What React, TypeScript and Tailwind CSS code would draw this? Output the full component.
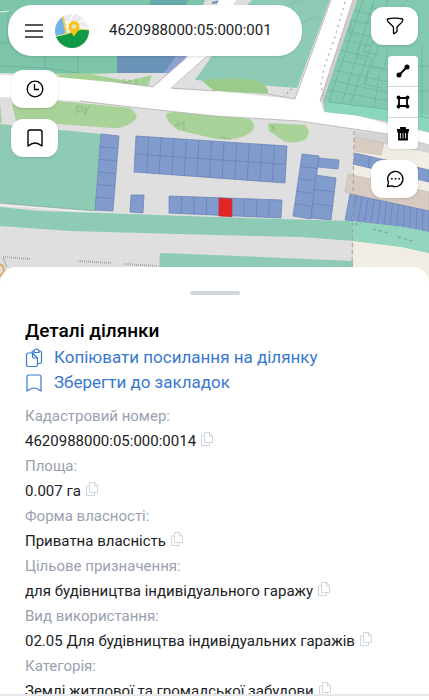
import type { ReactNode } from "react";

const parcelRows = [
  // Each block is a quadrilateral: top-left, top-right, bottom-right, bottom-left, and its column / row counts.
  { p: [101, 134, 119, 136, 113, 211, 95, 210], cols: 1, rows: 6 },
  { p: [136, 136, 287, 146, 285, 183, 134, 172], cols: 12, rows: 2 },
  { p: [131, 195, 144, 195, 143, 213, 130, 212], cols: 1, rows: 1 },
  { p: [169, 196, 282, 200, 281, 218, 169, 213], cols: 9, rows: 1 },
  { p: [302, 154, 319, 156, 311, 219, 293, 216], cols: 1, rows: 5 },
  { p: [319, 158, 339, 160, 338, 169, 318, 167], cols: 1, rows: 1 },
  { p: [316, 175, 336, 178, 331, 220, 311, 218], cols: 1, rows: 3 },
  { p: [355, 153, 429, 170, 429, 182, 353, 164], cols: 5, rows: 1 },
  { p: [350, 194, 429, 211, 429, 232, 345, 220], cols: 13, rows: 1 },
];

function Parcels({ p, cols, rows }: { p: number[]; cols: number; rows: number }) {
  const mix = (a: number, b: number, t: number) => a + (b - a) * t;
  const lines: string[] = [];
  for (let i = 1; i < cols; i++) {
    const t = i / cols;
    lines.push(`M${mix(p[0], p[2], t)} ${mix(p[1], p[3], t)}L${mix(p[6], p[4], t)} ${mix(p[7], p[5], t)}`);
  }
  for (let i = 1; i < rows; i++) {
    const t = i / rows;
    lines.push(`M${mix(p[0], p[6], t)} ${mix(p[1], p[7], t)}L${mix(p[2], p[4], t)} ${mix(p[3], p[5], t)}`);
  }
  return (
    <g stroke="#657fb5" strokeWidth=".7">
      <polygon points={p.join(" ")} fill="#819bcc" />
      <path d={lines.join("")} />
    </g>
  );
}

function CadastralMap() {
  return (
    <svg
      className="absolute inset-0 h-full w-full"
      viewBox="0 0 429 288"
      preserveAspectRatio="xMidYMin slice"
      aria-hidden="true"
    >
      <rect width="429" height="288" fill="#dfdfdf" />
      {/* north-west quarter */}
      <path d="M0 0H205L176 73H0Z" fill="#7cc5a9" />
      <path d="M0 11H8V43H0M8 25H28M45 56V68L78 73V56M0 66L45 68" fill="none" stroke="#63ad95" strokeWidth=".7" />
      <path d="M0 12L9 11" stroke="#e9f4ef" />
      <path d="M150 0H188L186 6H150Z" fill="#66a8ab" />
      <path d="M117 50H180L172 73H117Z" fill="#6b93b8" />
      <path d="M180 50H190L177 73H164Z" fill="#8da1d5" />
      <path d="M212 3L226 0M216 5L224 3" stroke="#7189ba" strokeWidth="2" />
      <path d="M0 73H118L78 75Z" fill="#9dd0a0" />
      {/* north block */}
      <path d="M252 0H330L297 88L195 80L216 50L244 8Z" fill="#8ecbb6" />
      <path d="M281 8L302 0M295 26L318 16" stroke="#76b5a0" strokeWidth=".7" />
      {/* planted verges */}
      <path d="M58 75L90 74L128 81L152 75L148 86L108 83L60 78Z" fill="#a6d194" />
      <path d="M202 81Q222 76 254 80Q269 84 268 94L214 91Z" fill="#9acb8b" />
      <path d="M12 105Q12 98 24 98L80 103L130 108Q139 115 136 119Q126 129 112 128L16 121Z" fill="#a9d298" />
      <path d="M0 103L2 123H0Z" fill="#a9d298" />
      <path d="M166 114Q170 111 185 112L250 119Q258 126 250 133Q232 144 207 137L178 130Q165 121 166 114Z" fill="#a9d298" />
      <path d="M268 123L305 125Q312 131 306 139Q296 145 284 141L269 131Z" fill="#a9d298" />
      <g fill="none" stroke="#8fb87d">
        <path d="M77 106V114M77 106H82V111H77M85 106V114L89 106M175 126L184 122V130M178 121V126M124 79V84L130 80V85M136 78V85M270 125L276 131M274 125L272 131M220 137L231 139" />
      </g>
      {/* north-east parcels */}
      <path d="M357 0H429V132L385 121L359 116L325 112L323 101Z" fill="#82c9b0" />
      <path d="M325 102L429 115V132L385 121L359 116L325 112Z" fill="#8ad6bf" />
      <path d="M357 0L323 101L319 101L353 0Z" fill="#d4ceca" />
      <g fill="none" stroke="#67ad98" strokeWidth=".6">
        <path d="M363 0L329 102L385 109L429 118M374 0L342 103M388 0L350 104M354 10L385 18M350 20L388 28M347 30L375 38M344 40L371 46M340 50L370 57M337 60L388 70M334 70L388 82M331 80L388 93M329 90L388 101M352 20L349 33L359 36M360 44L356 57L366 60M368 38L364 52L380 55M378 46L372 66L384 69L388 50M368 70L364 84L382 88M372 57L366 82M380 70L374 108M422 45V117M418 66H429M418 91H429M388 13L371 7M408 0L398 10" />
      </g>
      {/* roads */}
      <path d="M0 75L57 77L110 82L153 87L190 55L219 0H236L206 57L171 89L215 91L295 99L331 0H353L320 101L324 112L359 116L391 125L429 133V145L387 134L300 121L215 116L140 108L80 101L0 97Z" fill="#fff" />
      <path d="M153 87L118 82M186 57L153 87M206 57L171 88L215 91M268 94L295 99L331 0M353 0L320 101M80 101L140 108L215 116L300 121L387 134L429 145" fill="none" stroke="#b5afad" strokeWidth=".8" />
      <path d="M345 2L334 40L325 65L321 85L325 104" fill="none" stroke="#c3b6b8" strokeWidth="1.5" strokeDasharray="2 4" />
      <path d="M292 89L284 96" stroke="#d29b9b" strokeDasharray="2 3" strokeWidth="1.5" />
      {/* south-west fields */}
      <path d="M0 124L101 134L95 211L0 203Z" fill="#8dcbb5" />
      <path d="M0 203L95 211" stroke="#829e91" strokeWidth=".6" />
      <path d="M0 205L95 212" stroke="#f2f4f2" />
      {/* south-east yards */}
      <path d="M354 139L429 151V288H353Z" fill="#f2ede4" />
      <path d="M354 131L388 135L429 145V153L354 138Z" fill="#d5d4d3" />
      <path d="M355 137L384 143L381 155L354 151Z" fill="#d7cbc2" stroke="#c4b6ac" strokeWidth=".6" />
      <path d="M348 174L429 192V211L345 192Z" fill="#d7cbc2" stroke="#c4b6ac" strokeWidth=".6" />
      {parcelRows.map((block, i) => (
        <Parcels key={i} {...block} />
      ))}
      <path d="M219 198L232 199V217L219 216Z" fill="#e42525" stroke="#b7344c" strokeWidth=".6" />
      {/* southern green belt */}
      <path d="M0 207L40 211L100 213L215 217L350 221L403 227L429 232V253L402 247L355 241L300 237L215 235L70 231L0 226Z" fill="#8ecbb6" />
      <path d="M352 221L403 227L429 232V253L402 247L353 241Z" fill="#94d6bd" />
      <path d="M160 253L215 255L353 261V288H158Z" fill="#8ecbb6" />
      <path d="M354 131L352 270" stroke="#a6a0a4" strokeDasharray="4 3" />
      <path d="M355 224H362M373 229L388 233M398 237L413 241" stroke="#72ae99" strokeDasharray="3 3" strokeWidth="1.3" />
      <path d="M3 257L31 259M78 261L111 263M124 264L158 266" stroke="#a9a9a9" strokeWidth="2" strokeDasharray="1 1" />
      <path d="M3 258L7 267" stroke="#9fa3b1" />
      <circle cx="-2" cy="270" r="6" fill="none" stroke="#d8ad52" strokeWidth="2" />
    </svg>
  );
}

function Logo() {
  return (
    <svg className="size-[34px] shrink-0" viewBox="0 0 34 34" aria-hidden="true">
      <defs>
        <clipPath id="logo-disc">
          <circle cx="17" cy="17" r="17" />
        </clipPath>
      </defs>
      <g clipPath="url(#logo-disc)">
        <rect width="34" height="34" fill="#eceaf0" />
        <path d="M10 8L34 15M18 0L13 12M24 0L34 12M9 14L31 5" stroke="#fff" strokeWidth="1.2" />
        <path d="M0 0H7L11 20L0 23Z" fill="#76b1e8" />
        <path d="M7.500 1L11.500 20" stroke="#f4cf3a" strokeWidth="1.800" />
        <path d="M0 23Q14 20 20 17T34 16V34H0Z" fill="#109a46" />
        <path d="M0 22.500Q13 20 20 17T34 16" fill="none" stroke="#d9df58" />
        <path d="M19 23C17 18 13.500 17 13.500 12.500A5.500 5.500 0 0 1 24.500 12.500C24.500 17 21 18 19 23Z" fill="#fbc313" />
        <circle cx="19" cy="12.500" r="2.300" fill="#e9e3cf" />
      </g>
    </svg>
  );
}

function BookmarkIcon({ className }: { className: string }) {
  return (
    <svg className={className} viewBox="0 0 18 20" fill="none" stroke="currentColor" strokeLinejoin="round" aria-hidden="true">
      <path d="M2 4Q2 2 4 2H14Q16 2 16 4V18Q12 15 9 15T2 18Z" />
    </svg>
  );
}

function CopyIcon() {
  return (
    <svg className="size-[14px]" viewBox="0 0 14 14" fill="none" stroke="currentColor" strokeLinejoin="round" aria-hidden="true">
      <path d="M4.500 .5H9.500L12.500 4V10.500H4.500ZM9.500 .5V4H12.500M4.500 4H1.500V13.500H9.500V10.500" />
    </svg>
  );
}

function MapButton({ label, children }: { label: string; children: ReactNode }) {
  return (
    <button type="button" aria-label={label} className="flex h-[38px] w-[47px] items-center justify-center rounded-xl bg-white text-black shadow-sm">
      {children}
    </button>
  );
}

function Toolbar() {
  return (
    <div className="flex w-[30px] flex-col divide-y divide-gray-300 rounded-sm bg-white text-black shadow-sm">
      <button type="button" aria-label="Виміряти відстань" className="flex h-[31px] items-center justify-center">
        <svg className="size-[14px]" viewBox="0 0 14 14" aria-hidden="true">
          <path d="M3 11L11 3" stroke="currentColor" strokeWidth="2" />
          <circle cx="3" cy="11" r="2.500" />
          <circle cx="11" cy="3" r="2.500" />
        </svg>
      </button>
      <button type="button" aria-label="Виміряти площу" className="flex h-[31px] items-center justify-center">
        <svg className="size-[14px]" viewBox="0 0 14 14" aria-hidden="true">
          <path d="M3 3H11V11H3Z" fill="none" stroke="currentColor" strokeWidth="1.800" />
          <circle cx="2.500" cy="2.500" r="1.900" />
          <circle cx="11.500" cy="2.500" r="1.900" />
          <circle cx="2.500" cy="11.500" r="1.900" />
          <circle cx="11.500" cy="11.500" r="1.900" />
        </svg>
      </button>
      <button type="button" aria-label="Видалити" className="flex h-[31px] items-center justify-center">
        <svg className="size-[14px]" viewBox="0 0 14 14" fill="none" stroke="currentColor" strokeWidth="1.800" aria-hidden="true">
          <path d="M1 3H13M5 2V1H9V2M3 5V12.500H11V5M5.700 5V12M8.300 5V12M1.500 5H12.500" />
        </svg>
      </button>
    </div>
  );
}

const details = [
  { label: "Кадастровий номер:", value: "4620988000:05:000:0014" },
  { label: "Площа:", value: "0.007 га" },
  { label: "Форма власності:", value: "Приватна власність" },
  { label: "Цільове призначення:", value: "для будівництва індивідуального гаражу" },
  { label: "Вид використання:", value: "02.05 Для будівництва індивідуальних гаражів" },
  { label: "Категорія:", value: "Землі житлової та громадської забудови" },
];

export default function App() {
  return (
    <main className="flex h-screen flex-col overflow-hidden bg-white pb-1 font-['Roboto','Noto_Sans',sans-serif] text-[#202124]">
      <section aria-label="Карта" className="relative h-72 shrink-0">
        <CadastralMap />
        <div className="relative flex items-start pt-[5px] pr-[11px] pl-2">
          <div className="flex min-w-0 flex-1 flex-col gap-[11px]">
            <form className="mb-[3px] flex h-[51px] items-center rounded-3xl bg-white px-4 shadow-sm" onSubmit={(e) => e.preventDefault()}>
              <button type="button" aria-label="Меню" className="shrink-0">
                <svg className="size-5" viewBox="0 0 20 20" stroke="#222" strokeWidth="1.600" aria-hidden="true">
                  <path d="M1 4H19M1 10H19M1 16H19" />
                </svg>
              </button>
              <span className="ml-[11px] flex shrink-0">
                <Logo />
              </span>
              <input
                type="text"
                aria-label="Кадастровий номер"
                defaultValue="4620988000:05:000:001"
                className="ml-5 min-w-0 flex-1 bg-transparent text-[15px] outline-none"
              />
            </form>
            <div className="ml-[3px] flex flex-col gap-[11px]">
              <MapButton label="Історія">
                <svg className="size-[18px]" viewBox="0 0 18 18" fill="none" stroke="currentColor" strokeWidth="1.300" aria-hidden="true">
                  <circle cx="9" cy="9" r="7.800" />
                  <path d="M8.500 4V9.500H13" />
                </svg>
              </MapButton>
              <MapButton label="Закладки">
                <BookmarkIcon className="h-5 w-[18px] stroke-[1.4]" />
              </MapButton>
            </div>
          </div>
          <div className="ml-[69px] flex flex-col items-end gap-[11px] pt-[2px]">
            <MapButton label="Фільтр">
              <svg className="size-[18px]" viewBox="0 0 18 18" fill="none" stroke="currentColor" strokeWidth="1.300" strokeLinejoin="round" aria-hidden="true">
                <path d="M1.300 2Q9 .3 16.700 2Q17 4 15.500 5.600L11.500 9.500Q11 10 11 11V14.500L8 16.800Q7.500 16.500 7.500 15.500V11.500Q7.500 10 6.800 9.300L2.300 5Q1.200 3.800 1.300 2Z" />
              </svg>
            </MapButton>
            <Toolbar />
            <MapButton label="Чат">
              <svg className="size-[18px]" viewBox="0 0 18 18" fill="none" stroke="currentColor" strokeWidth="1.300" strokeLinejoin="round" aria-hidden="true">
                <path d="M1.500 16.500L2.500 12.500A7.600 7.600 0 1 1 6 15.900Z" />
                <path d="M5 8.800H6.600M8.700 8.800H10.300M12.400 8.800H14" strokeWidth="1.600" />
              </svg>
            </MapButton>
          </div>
        </div>
      </section>

      <section className="relative -mt-[21px] flex min-h-0 flex-1 flex-col overflow-hidden rounded-t-2xl border-b-2 border-gray-200 bg-white px-[25px] pt-6">
        <div className="h-1 w-[50px] shrink-0 self-center rounded-full bg-gray-300" />
        <h1 className="mt-6 text-[19px] leading-6 font-medium text-black">Деталі ділянки</h1>
        <div className="mt-[2px] flex flex-col items-start text-[17px] leading-[25px] text-[#3978cf]">
          <button type="button" className="flex items-center gap-[11px] whitespace-nowrap">
            <svg className="h-5 w-[18px]" viewBox="0 0 18 20" fill="none" stroke="currentColor" strokeWidth="1.200" strokeLinejoin="round" aria-hidden="true">
              <path d="M7 5V4Q7 3 8 3H9Q9.500 1 11.500 1T14 3H15Q16.500 3 16.500 4.500V14Q16.500 15.500 15 15.500H12.500M9 3V4.500H14V3M3 5H7.500L12.500 10V17Q12.500 18.500 11 18.500H3Q1.500 18.500 1.500 17V6.500Q1.500 5 3 5M7.500 5V8.500Q7.500 10 9 10H12.500" />
            </svg>
            Копіювати посилання на ділянку
          </button>
          <button type="button" className="flex items-center gap-[11px] whitespace-nowrap">
            <BookmarkIcon className="h-5 w-[18px] stroke-[1.2]" />
            Зберегти до закладок
          </button>
        </div>
        <dl className="mt-[9px] flex flex-col text-[15px] leading-[25px]">
          {details.map(({ label, value }) => (
            <div key={label}>
              <dt className="text-gray-400">{label}</dt>
              <dd className="flex h-[25px] items-center gap-1 whitespace-nowrap">
                {value}
                <button type="button" aria-label={`Копіювати: ${value}`} className="mb-[6px] text-gray-300">
                  <CopyIcon />
                </button>
              </dd>
            </div>
          ))}
        </dl>
      </section>
    </main>
  );
}
